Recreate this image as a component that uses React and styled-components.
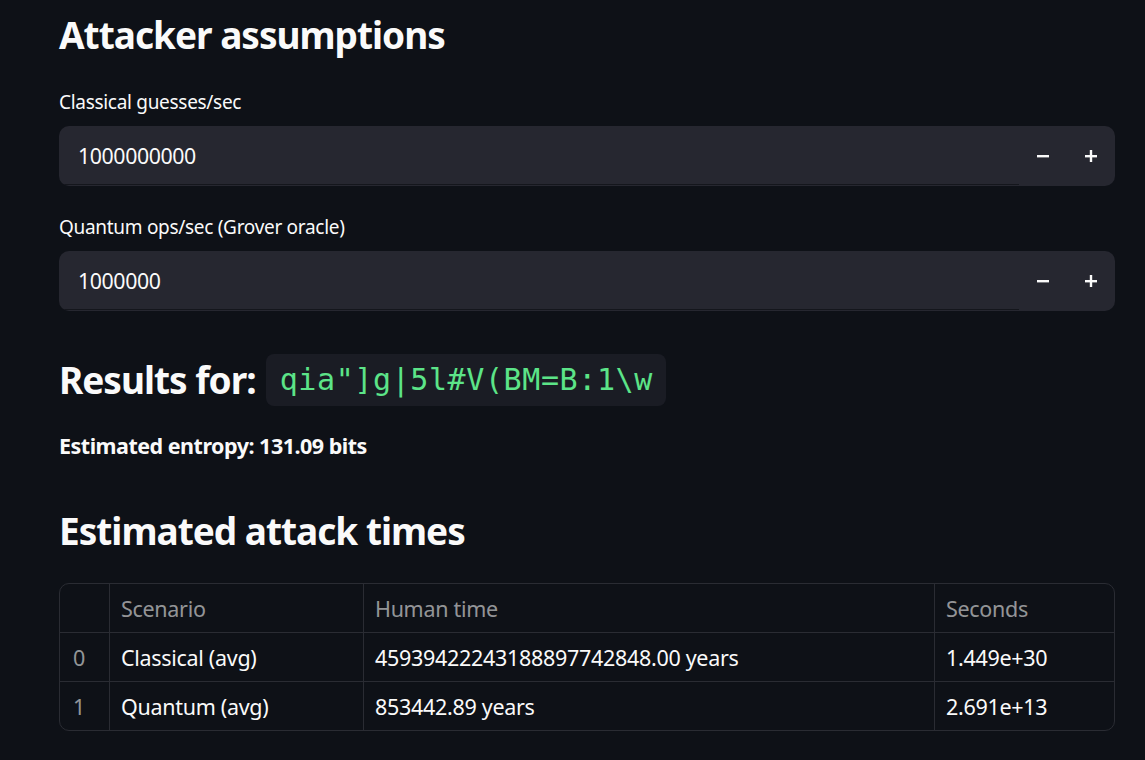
import React from 'react';
import styled, { createGlobalStyle } from 'styled-components';

const GlobalStyle = createGlobalStyle`
  html, body {
    margin: 0;
    padding: 0;
    background: #0e1117;
  }
  body {
    font-family: "Noto Sans", "Open Sans", sans-serif;
    color: #fafafa;
  }
`;

const Page = styled.div`
  width: 1056px;
  padding: 9px 0 0 59px;
`;

const Heading = styled.h2`
  margin: ${(p) => p.$mt || 0}px 0 0 0;
  font-size: 37px;
  line-height: 52px;
  font-weight: 700;
  letter-spacing: -1px;
  display: flex;
  align-items: center;
  gap: 10px;
`;

const Label = styled.div`
  margin-top: ${(p) => p.$mt || 0}px;
  font-size: 19px;
  line-height: 28px;
  letter-spacing: -0.3px;
  margin-bottom: 10px;
`;

const NumberBox = styled.div`
  display: flex;
  height: 60px;
  background: #262730;
  border-radius: 10px;
  overflow: hidden;
`;

const Field = styled.div`
  flex: 1;
  display: flex;
  align-items: center;
  padding-left: 19px;
  font-size: 21.3px;
  letter-spacing: -0.4px;
  border-bottom: 1px solid #14161c;
  margin-bottom: 1px;
`;

const StepButton = styled.div`
  width: 48px;
  display: flex;
  align-items: center;
  justify-content: center;
`;

const Code = styled.code`
  font-family: "DejaVu Sans Mono", "Liberation Mono", monospace;
  font-size: 30px;
  font-weight: 400;
  color: #5ce488;
  background: #1a1c24;
  border-radius: 8px;
  padding: 6px 13px 6px 14px;
  line-height: 40px;
  letter-spacing: 0.6px;
`;

const Entropy = styled.div`
  margin-top: 26px;
  font-size: 21.5px;
  font-weight: 700;
  letter-spacing: -0.5px;
  line-height: 28px;
`;

const Table = styled.div`
  margin-top: 26px;
  border: 1px solid #2a2c33;
  border-radius: 10px;
  overflow: hidden;
  display: grid;
  grid-template-columns: 50px 254px 571px 1fr;
`;

const Cell = styled.div`
  height: 48px;
  display: flex;
  align-items: center;
  padding-left: ${(p) => (p.$index ? 13 : 11)}px;
  font-size: 21.5px;
  letter-spacing: -0.3px;
  color: ${(p) => (p.$muted ? 'rgba(250,250,250,0.58)' : '#fafafa')};
  border-right: ${(p) => (p.$last ? 'none' : '1px solid #2a2c33')};
  border-bottom: ${(p) => (p.$bottom ? 'none' : '1px solid #2a2c33')};
`;

const Minus = () => (
  <svg width="14" height="14" viewBox="0 0 14 14">
    <rect x="1" y="6" width="12" height="2.4" fill="#fafafa" />
  </svg>
);

const Plus = () => (
  <svg width="14" height="14" viewBox="0 0 14 14">
    <rect x="1" y="6" width="12" height="2.4" fill="#fafafa" />
    <rect x="5.8" y="1" width="2.4" height="12" fill="#fafafa" />
  </svg>
);

const NumberInput = ({ value }) => (
  <NumberBox>
    <Field>{value}</Field>
    <StepButton><Minus /></StepButton>
    <StepButton><Plus /></StepButton>
  </NumberBox>
);

const rows = [
  ['0', 'Classical (avg)', '45939422243188897742848.00 years', '1.449e+30'],
  ['1', 'Quantum (avg)', '853442.89 years', '2.691e+13'],
];

export default function App() {
  return (
    <Page>
      <GlobalStyle />
      <Heading>Attacker assumptions</Heading>
      <Label $mt={27}>Classical guesses/sec</Label>
      <NumberInput value="1000000000" />
      <Label $mt={27}>Quantum ops/sec (Grover oracle)</Label>
      <NumberInput value="1000000" />
      <Heading $mt={43}>
        Results for: <Code>qia"]g|5l#V(BM=B:1\w</Code>
      </Heading>
      <Entropy>Estimated entropy: 131.09 bits</Entropy>
      <Heading $mt={45}>Estimated attack times</Heading>
      <Table>
        <Cell />
        <Cell $muted>Scenario</Cell>
        <Cell $muted>Human time</Cell>
        <Cell $muted $last>Seconds</Cell>
        {rows.map((r, i) => (
          <React.Fragment key={r[0]}>
            <Cell $muted $index $bottom={i === rows.length - 1}>{r[0]}</Cell>
            <Cell $bottom={i === rows.length - 1}>{r[1]}</Cell>
            <Cell $bottom={i === rows.length - 1}>{r[2]}</Cell>
            <Cell $last $bottom={i === rows.length - 1}>{r[3]}</Cell>
          </React.Fragment>
        ))}
      </Table>
    </Page>
  );
}
